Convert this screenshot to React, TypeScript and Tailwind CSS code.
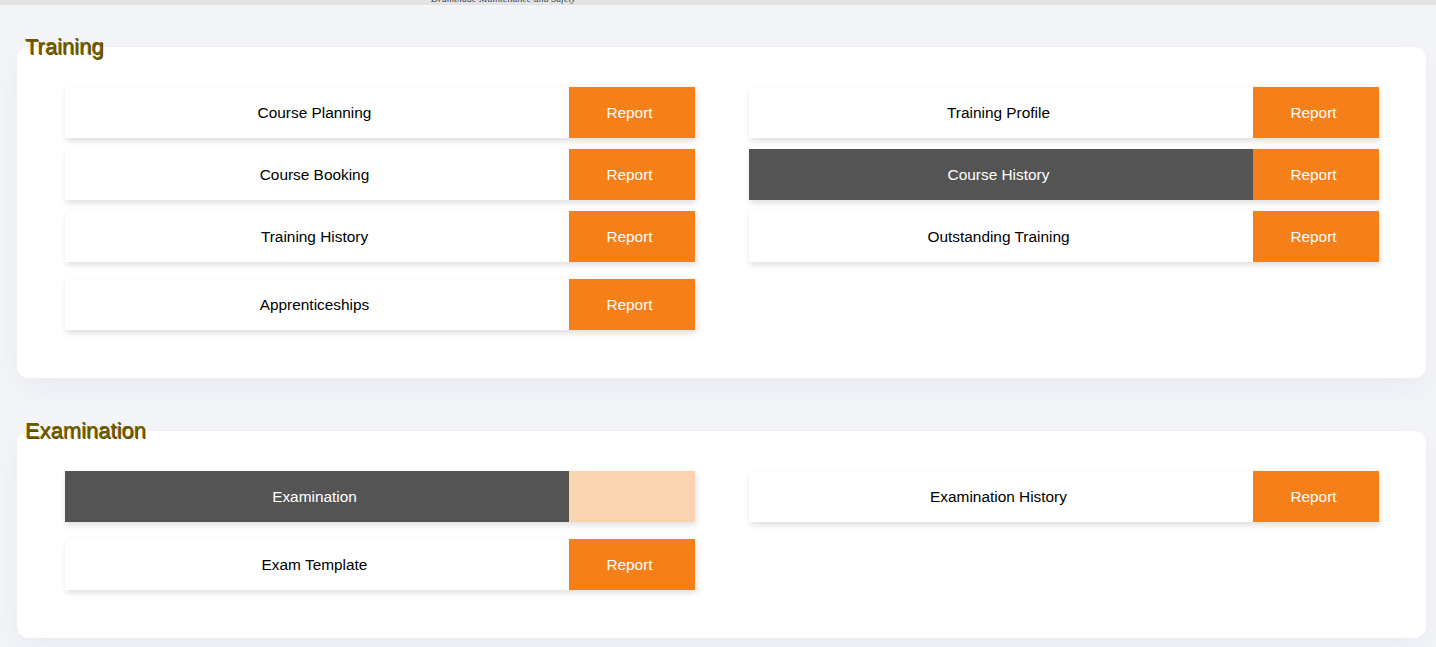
type Item = {
  label: string;
  dark?: boolean;
  muted?: boolean;
  spaced?: boolean;
};

const training: Item[][] = [
  [
    { label: "Course Planning" },
    { label: "Course Booking" },
    { label: "Training History" },
    { label: "Apprenticeships", spaced: true },
  ],
  [
    { label: "Training Profile" },
    { label: "Course History", dark: true },
    { label: "Outstanding Training" },
  ],
];

const examination: Item[][] = [
  [
    { label: "Examination", dark: true, muted: true },
    { label: "Exam Template", spaced: true },
  ],
  [{ label: "Examination History" }],
];

function ReportRow({ item }: { item: Item }) {
  return (
    <div
      className={`flex h-[51px] shadow-[1px_3px_6px_rgba(0,0,0,0.13)] ${item.spaced ? "mt-[6px]" : ""}`}
    >
      <div
        className={`flex flex-1 items-center justify-center pt-[1px] pr-[5px] text-[15.4px] ${
          item.dark ? "bg-[#545454] text-white" : "bg-white text-black"
        }`}
      >
        {item.label}
      </div>
      <button
        className={`flex w-[126px] items-center justify-center pt-[1px] pr-[5px] text-[15.4px] text-white ${
          item.muted ? "bg-[#fad3b0]" : "bg-[#f5801a]"
        }`}
      >
        {item.muted ? "" : "Report"}
      </button>
    </div>
  );
}

function Section({ title, columns }: { title: string; columns: Item[][] }) {
  return (
    <section>
      <h2 className="relative z-10 ml-[8px] text-[22px] leading-none text-[#6b5900] [text-shadow:0.7px_0.7px_0_#5a4a00,-0.6px_-0.3px_0_rgba(225,195,50,0.75)]">
        {title}
      </h2>
      <div className="-mt-[11px] rounded-[12px] bg-white pt-[40px] pb-[48px] pl-[48px] pr-[47px] shadow-[0_10px_30px_rgba(40,45,90,0.05)]">
        <div className="grid grid-cols-2 items-start gap-x-[54px]">
          {columns.map((col, i) => (
            <div key={i} className="flex flex-col gap-[11px]">
              {col.map((item) => (
                <ReportRow key={item.label} item={item} />
              ))}
            </div>
          ))}
        </div>
      </div>
    </section>
  );
}

export default function App() {
  return (
    <div className="min-h-[647px] bg-[#f4f5f9] font-['Liberation_Sans',Arial,sans-serif]">
      <div className="h-[5px] overflow-hidden bg-[#e3e3e3]">
        <div className="-mt-[6px] pl-[431px] font-['Liberation_Serif',serif] text-[10px] italic leading-[10px] text-[#3c4658]">
          Drumblade Maintenance and Safety
        </div>
      </div>

      <div className="flex flex-col gap-[42px] pt-[31px] pl-[17px] pr-[10px] pb-[9px]">
        <Section title="Training" columns={training} />
        <Section title="Examination" columns={examination} />
      </div>
    </div>
  );
}
